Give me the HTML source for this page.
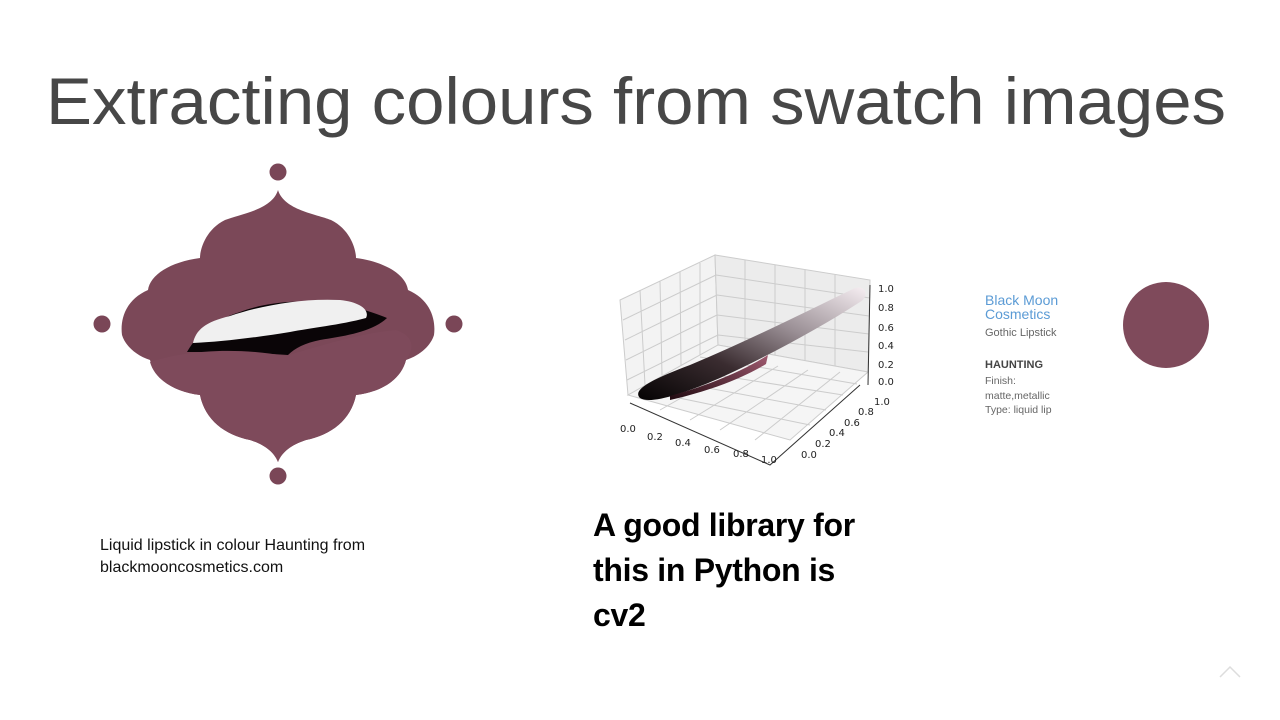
<!DOCTYPE html>
<html><head><meta charset="utf-8"><style>
html,body{margin:0;padding:0;background:#fff;}
body{width:1280px;height:720px;position:relative;overflow:hidden;font-family:"Liberation Sans",sans-serif;}
.abs{position:absolute;}
</style></head><body>
<svg class="abs" style="left:0;top:0" width="1280" height="720">
<text x="46" y="124" font-family="Liberation Sans" font-size="66" fill="#474747" textLength="1180" lengthAdjust="spacingAndGlyphs">Extracting colours from swatch images</text>
<circle cx="278" cy="172" r="8.5" fill="#7a4657"/>
<circle cx="278" cy="476" r="8.5" fill="#7a4657"/>
<circle cx="102" cy="324" r="8.5" fill="#7a4657"/>
<circle cx="454" cy="324" r="8.5" fill="#7a4657"/>
<path d="M278,190 C272,210 240,214 225,220 C205,230 200,250 200,258 C170,262 150,275 148,290 C125,300 120,320 122,335 C125,345 135,355 150,360 C155,380 175,392 200,395 C205,420 225,435 250,440 C265,445 274,452 278,462 C282,452 291,445 306,440 C331,435 351,420 356,395 C381,392 401,380 406,360 C421,355 431,345 434,335 C436,320 431,300 408,290 C406,275 386,262 356,258 C356,250 351,230 331,220 C316,214 284,210 278,190 Z" fill="#7b4858"/>
<path d="M187,352 C200,330 215,320 240,312 C270,300 330,294 387,318 C372,332 345,336 320,340 C305,343 295,348 288,355 C260,353 220,352 187,352 Z" fill="#0a0507"/>
<path d="M193,343 C196,330 205,322 230,316 C260,306 300,298 340,300 C360,302 370,310 366,318 C340,325 310,328 290,332 C260,337 220,342 193,343 Z" fill="#f0f0f0"/>
<path d="M150,362 C180,352 230,346 285,356 C320,346 360,333 396,330 C420,338 410,355 406,360 C401,380 381,392 356,395 C351,420 331,435 306,440 C291,445 282,452 278,462 C274,452 265,445 250,440 C225,435 205,420 200,395 C175,392 155,380 150,362 Z" fill="#7e4a5b"/>
<g stroke="#ccc" stroke-width="1" fill="none">
<polygon points="620,300 715,255 718,345 628,395" fill="#f3f3f3"/>
<polygon points="715,255 870,280 868,372 718,345" fill="#ececec"/>
<polygon points="628,395 718,345 868,372 790,440" fill="#f5f5f5"/>
<path d="M640,290 L645,385 M660,281 L662,375 M680,272 L681,365 M700,263 L700,355 M745,260 L745,350 M775,265 L775,355 M805,270 L805,360 M835,275 L835,366 M623,320 L716,275 M625,340 L717,295 M626,360 L717,315 M627,380 L718,335 M716,275 L870,298 M717,295 L869,316 M717,315 L869,334 M718,335 L868,352 M660,410 L748,360 M690,420 L778,366 M720,430 L808,370 M755,440 L840,372 M650,392 L810,425 M665,380 L826,410 M685,370 L843,395 M700,357 L857,384"/>
</g>
<path d="M630,403 L770,465 L860,385" stroke="#333" stroke-width="1" fill="none"/>
<path d="M870,285 L868,385" stroke="#333" stroke-width="1"/>
<defs><linearGradient id="g" x1="0" y1="1" x2="1" y2="0"><stop offset="0" stop-color="#050303"/><stop offset="0.35" stop-color="#3a2c30"/><stop offset="0.65" stop-color="#9a8f95"/><stop offset="1" stop-color="#f6eef2"/></linearGradient>
<linearGradient id="g2" x1="0" y1="1" x2="1" y2="0"><stop offset="0" stop-color="#200a10"/><stop offset="1" stop-color="#a05a70"/></linearGradient></defs>
<path d="M640,398 C632,390 650,380 690,365 C750,340 805,312 855,288 C868,285 868,298 860,302 C820,328 770,355 720,378 C685,393 650,405 640,398 Z" fill="url(#g)"/>
<path d="M670,396 C710,385 745,370 768,355 L766,364 C740,380 705,392 670,400 Z" fill="url(#g2)"/>
<g font-size="10" fill="#222" font-family="DejaVu Sans">
<text x="620" y="432">0.0</text><text x="647" y="440">0.2</text><text x="675" y="446">0.4</text><text x="704" y="453">0.6</text><text x="733" y="457">0.8</text><text x="761" y="463">1.0</text>
<text x="801" y="458">0.0</text><text x="815" y="447">0.2</text><text x="829" y="436">0.4</text><text x="844" y="426">0.6</text><text x="858" y="415">0.8</text><text x="874" y="405">1.0</text>
<text x="878" y="292">1.0</text><text x="878" y="311">0.8</text><text x="878" y="331">0.6</text><text x="878" y="349">0.4</text><text x="878" y="368">0.2</text><text x="878" y="385">0.0</text>
</g>
<circle cx="1166" cy="325" r="43" fill="#7f4a5b"/>
<path d="M1220,677 L1230,667 L1240,677" stroke="#ddd" stroke-width="1.5" fill="none"/>
</svg>
<div class="abs" style="left:985px;top:293px;color:#5b9bd5;font-size:14px;line-height:14px">Black Moon<br>Cosmetics</div>
<div class="abs" style="left:985px;top:327px;color:#666;font-size:11px">Gothic Lipstick</div>
<div class="abs" style="left:985px;top:359px;color:#444;font-size:11px;font-weight:bold">HAUNTING</div>
<div class="abs" style="left:985px;top:374px;color:#666;font-size:10.5px;line-height:14.5px">Finish:<br>matte,metallic<br>Type: liquid lip</div>
<div class="abs" style="left:100px;top:535px;font-size:16px;line-height:22px;color:#111">Liquid lipstick in colour Haunting from<br>blackmooncosmetics.com</div>
<div class="abs" style="left:593px;top:503px;font-size:32px;line-height:45px;font-weight:bold;color:#000;white-space:nowrap;letter-spacing:-0.3px">A good library for<br>this in Python is<br>cv2</div>
</body></html>
